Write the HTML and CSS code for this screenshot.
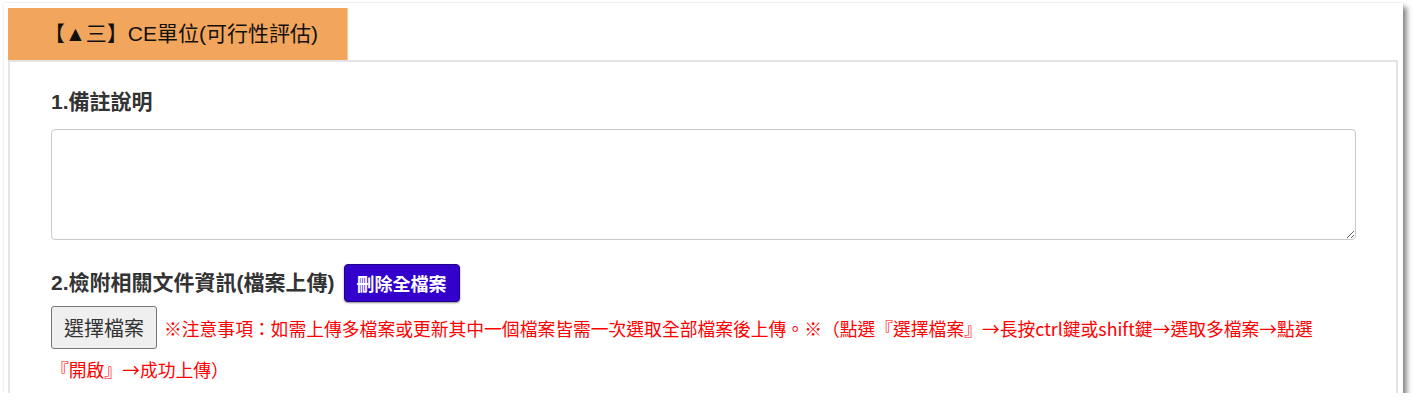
FILE: index.html
```html
<!DOCTYPE html>
<html lang="zh-Hant">
<head>
<meta charset="utf-8">
<title>CE單位(可行性評估)</title>
<link rel="stylesheet" href="styles.css">
</head>
<body>
<div class="frame">
  <div class="tab">【▲三】CE單位(可行性評估)</div>
  <div class="panel">
    <div class="label">1.備註說明</div>
    <textarea class="memo"></textarea>
    <div class="row">
      <span class="label">2.檢附相關文件資訊(檔案上傳)</span>
      <button class="del-btn" type="button">刪除全檔案</button>
    </div>
    <div class="upload"><button class="file-btn" type="button">選擇檔案</button><span class="note">※注意事項：如需上傳多檔案或更新其中一個檔案皆需一次選取全部檔案後上傳。※（點選『選擇檔案』→長按ctrl鍵或shift鍵→選取多檔案→點選<span class="nobr">『開啟』→成功上傳）</span></span></div>
  </div>
</div>
</body>
</html>
```

FILE: styles.css
```css
html, body {
  margin: 0;
  padding: 0;
  background: #ffffff;
}

body {
  font-family: "Liberation Sans", "Noto Sans CJK TC", sans-serif;
  color: #333;
}

.frame {
  margin: 3px 0 0 4px;
  width: 1399px;
  height: 390px;
  box-sizing: border-box;
  padding: 5px 5px 0 4px;
  background: #fff;
  overflow: hidden;
  box-shadow: 4px 4px 5px rgba(0, 0, 0, 0.45), 0 0 2px rgba(0, 0, 0, 0.12);
}

.tab {
  width: 340px;
  height: 52px;
  box-sizing: border-box;
  background: #f2a55c;
  border-right: 1px solid #f7c596;
  color: #111;
  font-size: 21px;
  line-height: 52px;
  padding-left: 36px;
  white-space: nowrap;
}

.panel {
  border: 2px solid #e4e4e4;
  border-bottom: none;
  padding: 26px 40px 40px 41px;
  height: 400px;
  box-sizing: border-box;
}

.label {
  font-size: 21px;
  font-weight: bold;
  color: #333;
  line-height: 28px;
}

.memo {
  display: block;
  margin-top: 13px;
  width: 100%;
  height: 111px;
  box-sizing: border-box;
  border: 1px solid #cacaca;
  border-radius: 4px;
  font-family: inherit;
  font-size: 16px;
  padding: 6px;
  resize: both;
}

.row {
  display: flex;
  align-items: center;
  gap: 9px;
  margin-top: 24px;
}

.del-btn {
  height: 38px;
  padding: 0 12px;
  background: #3300cc;
  border: 1px solid #1e0088;
  border-radius: 4px;
  box-shadow: 0 1px 2px rgba(0, 0, 0, 0.45);
  color: #fff;
  font-family: inherit;
  font-size: 18px;
  font-weight: bold;
}

.upload {
  margin-top: 4px;
  line-height: 38px;
}

.file-btn {
  display: inline-block;
  vertical-align: baseline;
  height: 43px;
  padding: 0 12px;
  margin-right: 7px;
  background: #efefef;
  border: 1px solid #767676;
  border-radius: 3px;
  color: #333;
  font-family: inherit;
  font-size: 20px;
  line-height: normal;
}

.note {
  color: #ff0000;
  font-family: "Noto Sans CJK TC", "Liberation Sans", sans-serif;
  font-size: 17.8px;
}

.nobr {
  white-space: nowrap;
}
```
